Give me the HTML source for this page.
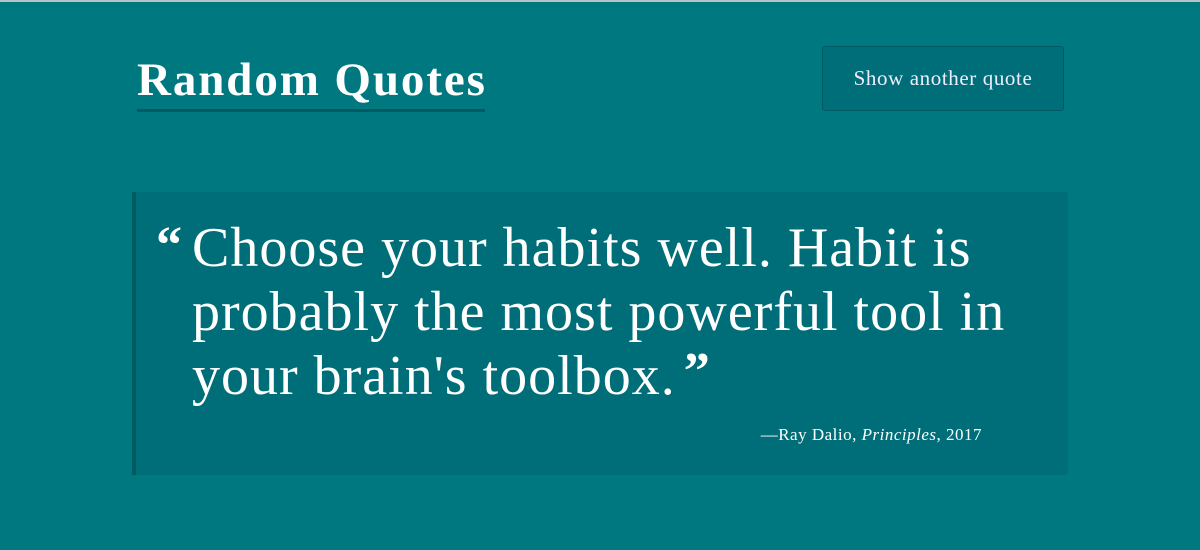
<!DOCTYPE html>
<html><head><meta charset="utf-8"><style>
html,body{margin:0;padding:0}
body{width:1200px;height:550px;background:#007880;border-top:2px solid #b9c3c5;box-sizing:border-box;position:relative;overflow:hidden;font-family:"Liberation Serif",serif;color:#fff}
.title{position:absolute;left:137px;top:52px;width:348px;font-size:47px;font-weight:bold;letter-spacing:1.9px;line-height:52px;border-bottom:3px solid #005a62;white-space:nowrap;padding-bottom:3px}
.btn{position:absolute;left:822px;top:44px;width:240px;height:63px;background:#006e78;border:1px solid #005a62;border-radius:3px;font-size:21px;letter-spacing:.6px;line-height:63px;text-align:center;color:#eef}
.box{position:absolute;left:132px;top:190px;width:932px;height:283px;background:#006e78;border-left:4px solid #005a62;border-radius:0 3px 3px 0}
.q{position:absolute;left:56px;top:24px;font-size:56px;line-height:64px;white-space:nowrap;letter-spacing:1px}
.om{position:absolute;left:-36px;top:-2px;font-size:52px;font-weight:bold}
.cm{font-size:52px;font-weight:bold;vertical-align:top;position:relative;top:-4px;margin-left:8px}
.attr{position:absolute;right:86px;top:233px;font-size:17px;letter-spacing:.5px}
</style></head><body>
<div class="title">Random Quotes</div>
<div class="btn">Show another quote</div>
<div class="box">
<div class="q"><span class="om">“</span>Choose your habits well. Habit is<br>probably the most powerful tool in<br>your brain's toolbox.<span class="cm">”</span></div>
<div class="attr">—Ray Dalio, <i>Principles</i>, 2017</div>
</div>
</body></html>
